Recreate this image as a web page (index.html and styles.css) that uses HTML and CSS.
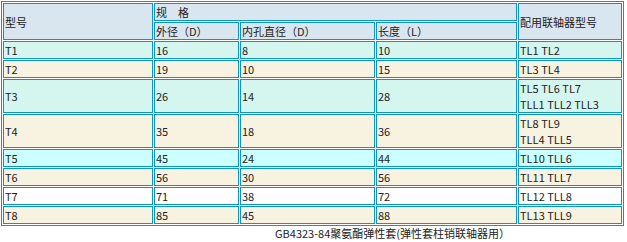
FILE: index.html
```html
<!DOCTYPE html>
<html>
<head>
<meta charset="utf-8">
<link rel="stylesheet" href="styles.css">
</head>
<body>
<table class="spec">
  <colgroup>
    <col class="c1"><col class="c2"><col class="c3"><col class="c4"><col class="c5">
  </colgroup>
  <tr class="head">
    <td rowspan="2">型号</td>
    <td colspan="3">规　格</td>
    <td rowspan="2">配用联轴器型号</td>
  </tr>
  <tr class="head">
    <td>外径（D）</td>
    <td>内孔直径（D）</td>
    <td>长度（L）</td>
  </tr>
  <tr class="mint"><td>T1</td><td>16</td><td>8</td><td>10</td><td>TL1 TL2</td></tr>
  <tr class="cream"><td>T2</td><td>19</td><td>10</td><td>15</td><td>TL3 TL4</td></tr>
  <tr class="mint"><td>T3</td><td>26</td><td>14</td><td>28</td><td>TL5 TL6 TL7<br>TLL1 TLL2 TLL3</td></tr>
  <tr class="cream"><td>T4</td><td>35</td><td>18</td><td>36</td><td>TL8 TL9<br>TLL4 TLL5</td></tr>
  <tr class="cyan"><td>T5</td><td>45</td><td>24</td><td>44</td><td>TL10 TLL6</td></tr>
  <tr class="cream"><td>T6</td><td>56</td><td>30</td><td>56</td><td>TL11 TLL7</td></tr>
  <tr class="white"><td>T7</td><td>71</td><td>38</td><td>72</td><td>TL12 TLL8</td></tr>
  <tr class="cream"><td>T8</td><td>85</td><td>45</td><td>88</td><td>TL13 TLL9</td></tr>
</table>
<div class="caption">GB4323-84聚氨酯弹性套(弹性套柱销联轴器用）</div>
</body>
</html>
```
FILE: styles.css
```css
body {
  margin: 0;
  padding: 1px 0 0 1px;
  background: #fff;
  font-family: "Noto Sans CJK SC", sans-serif;
  font-size: 11px;
  line-height: 16px;
  color: #222;
}
.spec {
  width: 623px;
  table-layout: fixed;
  border: 1px solid #0a96c8;
  border-spacing: 1px;
  border-collapse: separate;
}
.c1 { width: 150px; }
.c2 { width: 85px; }
.c3 { width: 135px; }
.c4 { width: 141px; }
.spec td {
  border: 1px solid #0a96c8;
  padding: 0 1px;
  height: 16px;
  line-height: 16px;
  vertical-align: middle;
  text-align: left;
  white-space: nowrap;
}
.head td { background: #d9e5ef; }
.mint td { background: #d5f6ef; }
.cream td { background: #f8f2e0; }
.cyan td { background: #ccffff; }
.white td { background: #ffffff; }
.caption {
  margin: 0 0 0 274px;
  line-height: 15px;
  color: #222;
}
```
